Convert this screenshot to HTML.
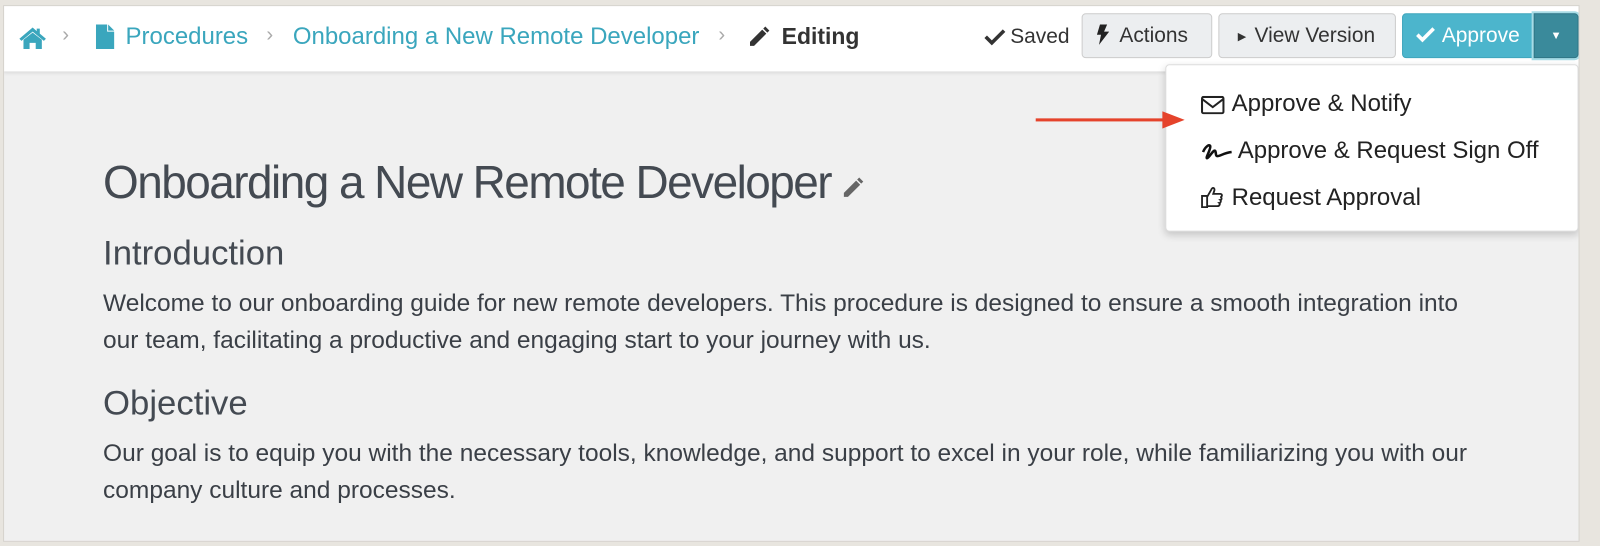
<!DOCTYPE html>
<html><head><meta charset="utf-8"><style>
*{margin:0;padding:0;box-sizing:border-box}
html,body{width:1600px;height:546px;overflow:hidden;background:#e8e5df;font-family:"Liberation Sans",sans-serif}
.wrap{position:absolute;left:0;top:0;width:1568px;height:535px;transform:scale(1.0204);transform-origin:0 0}
.frame{position:absolute;left:3px;top:5px;width:1545px;height:526px;background:#f0f0f0;border:1px solid #d6d3cd;overflow:hidden}
.hdr{position:absolute;left:0;top:0;right:0;height:65px;background:#fff;border-bottom:1px solid #ddd;box-shadow:0 1px 3px rgba(0,0,0,.08)}
.bc{position:absolute;top:16px;font-size:23.5px;color:#3aa6bd;white-space:nowrap}
.sep{position:absolute;top:17px;font-size:20px;color:#aaa}
.btn{position:absolute;top:7px;height:44px;border:1px solid #ccc;border-radius:4px;background:#eceef0;font-size:20.5px;color:#333;line-height:42px;white-space:nowrap;padding-left:14px}
.menu{position:absolute;left:1138px;top:57px;width:405px;height:164px;background:#fff;border:1px solid #ddd;border-radius:4px;box-shadow:0 3px 8px rgba(0,0,0,.18)}
.mi{position:absolute;left:34px;font-size:23.5px;color:#222;white-space:nowrap}
.c{position:absolute;left:97px;color:#444a52;white-space:nowrap}
p.c{font-size:24px;line-height:36px;color:#3a3f46}
</style></head><body>
<div class="wrap">
<div class="frame">
 <div class="hdr">
  <svg style="position:absolute;left:14px;top:19px" width="28" height="24" viewBox="0 0 28 24"><path d="M14 2 L1 13 L3 15 L14 6 L25 15 L27 13 L21 8 V3 H18 V5.5Z" fill="#3aa6bd"/><path d="M5 14 L14 7 L23 14 V23 H17 V17 H11 V23 H5Z" fill="#3aa6bd"/></svg>
  <span class="sep" style="left:57px">›</span>
  <svg style="position:absolute;left:90px;top:18px" width="18" height="24" viewBox="0 0 18 24"><path d="M0 0H11V7H18V24H0Z" fill="#3aa6bd"/><path d="M12 0L18 6H12Z" fill="#3aa6bd"/></svg>
  <span class="bc" style="left:119px">Procedures</span>
  <span class="sep" style="left:257px">›</span>
  <span class="bc" style="left:283px">Onboarding a New Remote Developer</span>
  <span class="sep" style="left:700px">›</span>
  <svg style="position:absolute;left:728px;top:18px" width="24" height="24" viewBox="0 0 24 24"><path d="M3 17 L15 5 L19 9 L7 21 H3Z M16 4 L18 2 L22 6 L20 8Z" fill="#333"/></svg>
  <span class="bc" style="left:762px;color:#333;font-weight:bold;font-size:22.5px;top:17px">Editing</span>
  <svg style="position:absolute;left:960px;top:21px" width="22" height="18" viewBox="0 0 22 18"><path d="M2 9 L8 15 L20 3" stroke="#333" stroke-width="3.5" fill="none"/></svg>
  <span style="position:absolute;left:986px;top:18px;font-size:20.5px;color:#333">Saved</span>
  <div class="btn" style="left:1056px;width:128px"><svg style="vertical-align:-3px;margin-right:10px" width="12" height="20" viewBox="0 0 12 20"><path d="M3 0H10L7 7H12L2 20L4 10H0Z" fill="#222"/></svg>Actions</div>
  <div class="btn" style="left:1190px;width:174px;padding-left:18px"><span style="font-size:11px;vertical-align:2px;margin-right:8px">▶</span>View Version</div>
  <div class="btn" style="left:1370px;width:130px;background:#4cb5cc;border-color:#3fa5bc;color:#fff;border-radius:4px 0 0 4px;padding-left:12px"><svg style="vertical-align:-2px;margin-right:6px" width="20" height="17" viewBox="0 0 20 17"><path d="M2 8 L7 13 L18 2" stroke="#fff" stroke-width="3.5" fill="none"/></svg>Approve</div>
  <div class="btn" style="left:1499px;width:44px;background:#3a8a9b;border-color:#2f7585;color:#fff;border-radius:0 4px 4px 0;padding:0;text-align:center;font-size:11px;box-shadow:0 0 0 2px #a7dce6">▼</div>
 </div>
 <div class="menu">
  <svg style="position:absolute;left:34px;top:30px" width="23" height="18" viewBox="0 0 23 18"><rect x="1" y="1" width="21" height="16" rx="1.5" fill="none" stroke="#222" stroke-width="2"/><path d="M1 3L11.5 11L22 3" fill="none" stroke="#222" stroke-width="2"/></svg>
  <span class="mi" style="left:64px;top:24px">Approve &amp; Notify</span>
  <svg style="position:absolute;left:34px;top:76px" width="32" height="18" viewBox="0 0 32 18"><path d="M2 9C4 4 8 1 9 3C10 6 4 15 6 15C8 15 12 6 14 8C15 10 14 13 16 13C19 13 22 10 30 9" fill="none" stroke="#111" stroke-width="2.5"/></svg>
  <span class="mi" style="left:70px;top:70px">Approve &amp; Request Sign Off</span>
  <svg style="position:absolute;left:34px;top:118px" width="22" height="22" viewBox="0 0 22 22"><path d="M1 10H6V21H1Z M6 11 L10 4 C11 1 14 2 13 5 L12 8 H19 C21 8 21 11 19 11 C21 12 20 14 19 14 C20 15 19 17 18 17 C19 18 18 20 16 20 H6" fill="none" stroke="#222" stroke-width="1.8"/></svg>
  <span class="mi" style="left:64px;top:116px">Request Approval</span>
 </div>
 <div style="position:absolute;left:1011px;top:110px;width:128px;height:3px;background:#e5432b"></div>
 <svg style="position:absolute;left:1135px;top:103px" width="22" height="17"><path d="M0 0L22 8.5L0 17Z" fill="#e5432b"/></svg>
 <div class="c" style="top:147px;font-size:45px;letter-spacing:-1.5px">Onboarding a New Remote Developer</div>
 <svg style="position:absolute;left:820px;top:166px" width="24" height="24" viewBox="0 0 24 24"><path d="M3 17 L15 5 L19 9 L7 21 H3Z M16 4 L18 2 L22 6 L20 8Z" fill="#666"/></svg>
 <div class="c" style="top:223px;font-size:34px">Introduction</div>
 <p class="c" style="top:274px">Welcome to our onboarding guide for new remote developers. This procedure is designed to ensure a smooth integration into<br>our team, facilitating a productive and engaging start to your journey with us.</p>
 <div class="c" style="top:370px;font-size:34px">Objective</div>
 <p class="c" style="top:421px">Our goal is to equip you with the necessary tools, knowledge, and support to excel in your role, while familiarizing you with our<br>company culture and processes.</p>
</div>
</div>
</body></html>
